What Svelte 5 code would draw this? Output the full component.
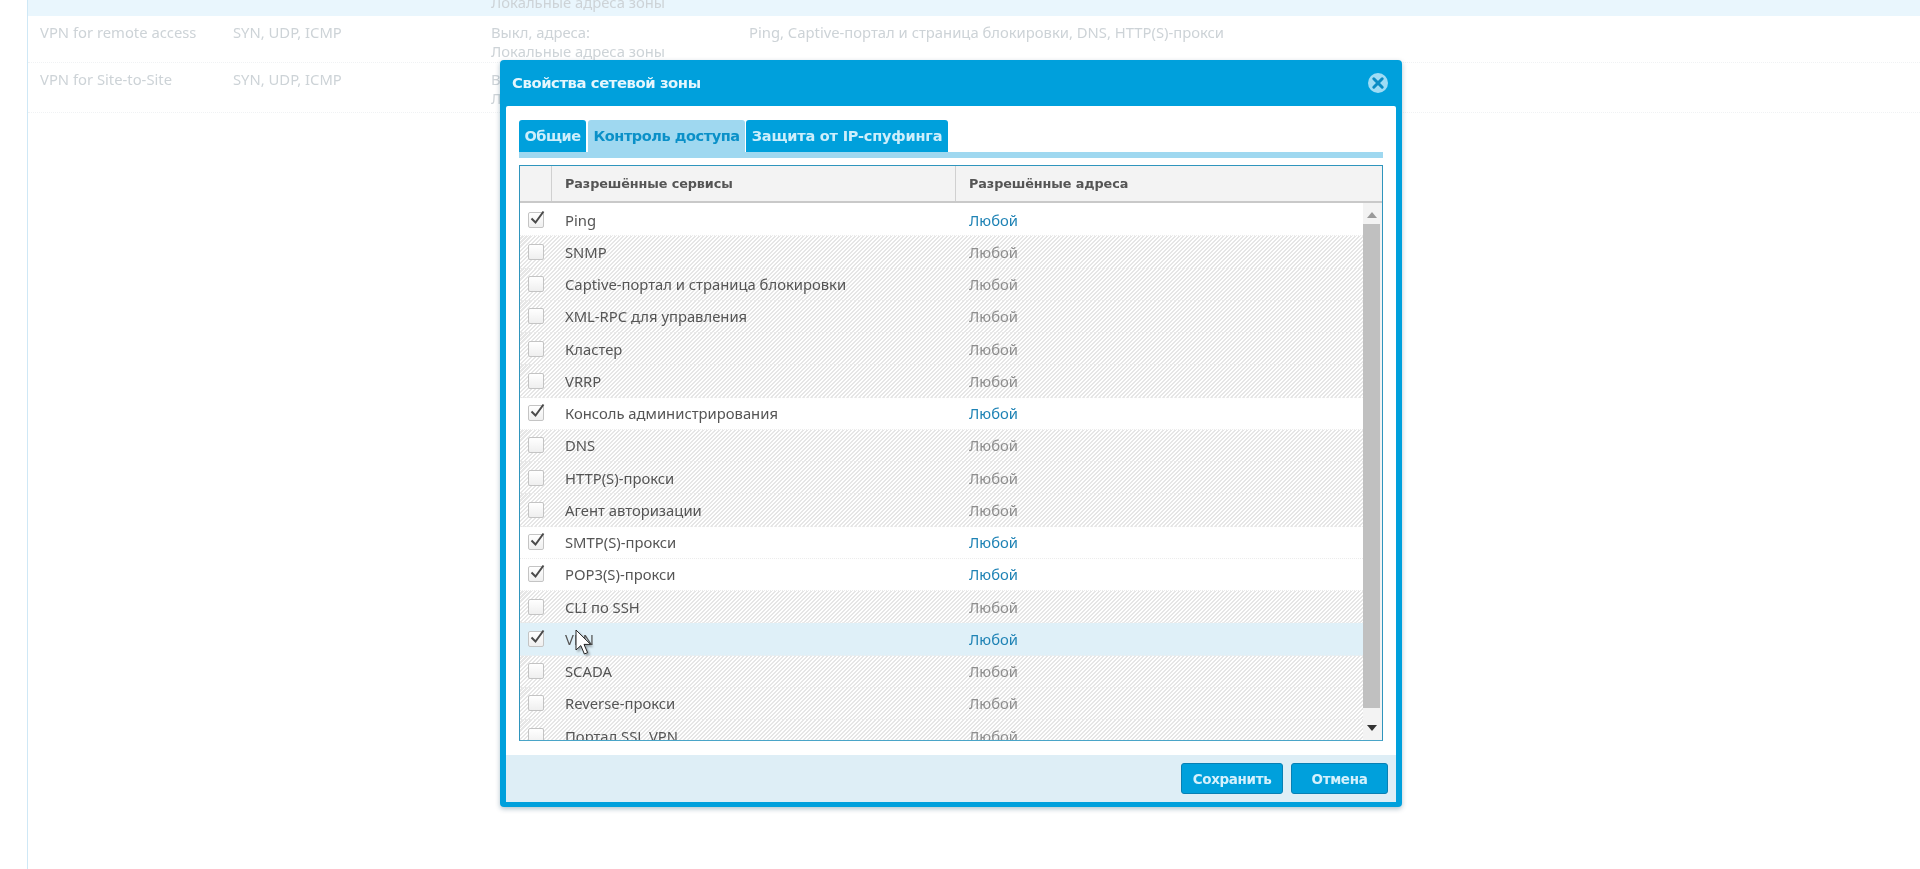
<script>
  const bg = [
    { name: 'VPN for remote access', proto: 'SYN, UDP, ICMP', addr: ['Выкл, адреса:', 'Локальные адреса зоны'], svc: 'Ping, Captive-портал и страница блокировки, DNS, HTTP(S)-прокси' },
    { name: 'VPN for Site-to-Site', proto: 'SYN, UDP, ICMP', addr: ['Выкл, адреса:', 'Локальные адреса зоны'], svc: '' }
  ];
  const rows = [
    ['Ping', true], ['SNMP', false], ['Captive-портал и страница блокировки', false],
    ['XML-RPC для управления', false], ['Кластер', false], ['VRRP', false],
    ['Консоль администрирования', true], ['DNS', false], ['HTTP(S)-прокси', false],
    ['Агент авторизации', false], ['SMTP(S)-прокси', true], ['POP3(S)-прокси', true],
    ['CLI по SSH', false], ['VPN', true, true], ['SCADA', false], ['Reverse-прокси', false],
    ['Портал SSL VPN', false]
  ];
</script>

<div class="page">
  <div class="bgtable">
    <div class="toprow"><span class="addrcell">Локальные адреса зоны</span></div>
    {#each bg as r}
      <div class="bgrow">
        <span>{r.name}</span>
        <span>{r.proto}</span>
        <span>{r.addr[0]}<br />{r.addr[1]}</span>
        <span>{r.svc}</span>
      </div>
    {/each}
  </div>

  <div class="dialog">
    <header class="dhead">
      <span class="dtitle">Свойства сетевой зоны</span>
      <svg class="close" width="22" height="22" viewBox="0 0 22 22" aria-hidden="true">
        <circle cx="11" cy="11" r="10" fill="#9fdcf5" />
        <path d="M6.8 6.8 15.2 15.2M15.2 6.8 6.8 15.2" stroke="#0a8cc4" stroke-width="3" stroke-linecap="round" />
      </svg>
    </header>

    <div class="dbody">
      <div class="tabs">
        <span class="tab t1">Общие</span>
        <span class="tab t2 active">Контроль доступа</span>
        <span class="tab t3">Защита от IP-спуфинга</span>
      </div>
      <div class="strip"></div>

      <div class="grid">
        <div class="ghead">
          <span class="hc0"></span>
          <span class="hc1">Разрешённые сервисы</span>
          <span class="hc2">Разрешённые адреса</span>
        </div>
        <div class="gbody">
          <div class="rows">
            {#each rows as r}
              <div class="row" class:off={!r[1]} class:hover={r[2]}>
                <span class="cc">
                  <span class="box">
                    {#if r[1]}
                      <svg class="check" width="18" height="18" viewBox="0 0 18 18" aria-hidden="true">
                        <path d="M3.5 9.5 7.5 13.5 15.5 2.5" fill="none" stroke="#4a4a4a" stroke-width="2" />
                      </svg>
                    {/if}
                  </span>
                </span>
                <span class="c1">{r[0]}</span>
                <span class="c2">Любой</span>
              </div>
            {/each}
          </div>
          <div class="sbar">
            <svg class="arrow" width="10" height="6" viewBox="0 0 10 6" aria-hidden="true"><path d="M5 0 10 6H0Z" fill="#9a9a9a" /></svg>
            <div class="thumb"></div>
            <svg class="arrow" width="10" height="6" viewBox="0 0 10 6" aria-hidden="true"><path d="M5 6 10 0H0Z" fill="#333" /></svg>
          </div>
        </div>
      </div>
    </div>

    <footer class="dfoot">
      <button class="btn save">Сохранить</button>
      <button class="btn cancel">Отмена</button>
    </footer>
  </div>

  <svg class="cursor" width="20" height="28" viewBox="0 0 20 28" aria-hidden="true">
    <path d="M2 1V21L6.8 16.6 10.4 25 13.6 23.6 10 15.4H16.6Z" fill="#fff" stroke="#222" stroke-width="1" />
  </svg>
</div>

<style>
  :global(body) {
    margin: 0;
    background: #fff;
  }
  .page {
    position: relative;
    width: 1920px;
    height: 869px;
    overflow: hidden;
    font-family: "Noto Sans", "DejaVu Sans", sans-serif;
    font-size: 14.8px;
    background: #fff;
    filter: blur(0.45px);
  }
  .bgtable {
    margin-left: 27px;
    height: 869px;
    border-left: 1px solid #cfe8f6;
    color: #cdd3d7;
    line-height: 19px;
  }
  .toprow {
    height: 16px;
    background: #e9f6fd;
    overflow: hidden;
    position: relative;
    padding-left: 463px;
  }
  .addrcell {
    display: block;
    margin-top: -7px;
  }
  .bgrow {
    display: grid;
    grid-template-columns: 193px 258px 258px 1fr;
    padding: 7px 0 0 12px;
    height: 39px;
    border-bottom: 1px dotted #f0f2f4;
  }
  .bgrow + .bgrow {
    height: 42px;
  }
  .dialog {
    position: absolute;
    left: 500px;
    top: 60px;
    width: 902px;
    height: 747px;
    box-sizing: border-box;
    background: #00a0dc;
    border-radius: 4px;
    padding: 0 6px 5px;
    display: flex;
    flex-direction: column;
    box-shadow: 0 2px 5px rgba(0, 60, 90, 0.3);
  }
  .dhead {
    height: 45px;
    flex: none;
    display: flex;
    align-items: center;
    justify-content: space-between;
    padding: 0 7px 1px 6px;
    color: #e4f6fd;
  }
  .dtitle {
    font-family: "DejaVu Sans", sans-serif;
    font-weight: 700;
    font-size: 14.8px;
    letter-spacing: -0.42px;
  }
  .close {
    display: block;
  }
  .dbody {
    flex: 1;
    min-height: 0;
    background: #fff;
    padding: 14px 13px 14px;
    display: flex;
    flex-direction: column;
    border-radius: 2px 2px 0 0;
  }
  .tabs {
    display: flex;
    height: 32px;
    gap: 2px;
    flex: none;
  }
  .tab {
    box-sizing: border-box;
    display: flex;
    align-items: center;
    justify-content: center;
    font-family: "DejaVu Sans", sans-serif;
    font-weight: 700;
    font-size: 14.5px;
    letter-spacing: -0.45px;
    background: #00a0dc;
    color: #cdeefb;
    border-radius: 3px 3px 0 0;
    white-space: nowrap;
  }
  .t1 { width: 67px; }
  .t2 { width: 157px; }
  .t3 { width: 202px; margin-left: -1px; letter-spacing: -0.2px; }
  .tab.active {
    background: #9fd8f0;
    color: #0a90c8;
  }
  .strip {
    height: 6px;
    flex: none;
    background: #9fd8f0;
  }
  .grid {
    margin-top: 7px;
    flex: 1;
    min-height: 0;
    border: 1px solid #2f95bd;
    border-bottom-color: #4aa5c8;
    display: flex;
    flex-direction: column;
    overflow: hidden;
  }
  .ghead {
    flex: none;
    height: 37px;
    box-sizing: border-box;
    display: flex;
    background: #f3f3f3;
    border-bottom: 2px solid #c9c9c9;
    color: #555;
    font-family: "DejaVu Sans", sans-serif;
    font-weight: 700;
    font-size: 12.8px;
    letter-spacing: -0.1px;
  }
  .ghead span {
    display: flex;
    align-items: center;
    box-sizing: border-box;
  }
  .hc0 {
    width: 32px;
    border-right: 1px solid #d0d0d0;
  }
  .hc1 {
    width: 404px;
    padding-left: 13px;
    border-right: 1px solid #d0d0d0;
  }
  .hc2 {
    padding-left: 13px;
  }
  .gbody {
    flex: 1;
    min-height: 0;
    display: flex;
    overflow: hidden;
  }
  .rows {
    flex: 1;
    min-width: 0;
    padding-top: 1px;
  }
  .row {
    height: 32.25px;
    display: flex;
    align-items: center;
    color: #555;
    background: #fff;
    border-bottom: 1px dotted #ececec;
    box-sizing: border-box;
  }
  .row.off {
    background: repeating-linear-gradient(135deg, #ffffff 0 1.41px, #e6e6e6 1.41px 2.83px);
  }
  .row.hover {
    background: #dff0f8;
  }
  .cc {
    width: 32px;
    flex: none;
    display: flex;
    justify-content: center;
  }
  .box {
    position: relative;
    box-sizing: border-box;
    width: 16px;
    height: 16px;
    background: linear-gradient(#ffffff, #efefef);
    border: 1px solid #c4c4c4;
    border-radius: 2px;
  }
  .check {
    position: absolute;
    left: -1px;
    top: -4px;
  }
  .c1 {
    width: 404px;
    flex: none;
    box-sizing: border-box;
    padding-left: 13px;
  }
  .c2 {
    padding-left: 13px;
    color: #8e8e8e;
  }
  .row:not(.off) .c2 {
    color: #1f83b5;
  }
  .sbar {
    flex: none;
    width: 19px;
    background: #f3f3f3;
    display: flex;
    flex-direction: column;
    align-items: center;
    padding: 9px 2px 9px 0;
    box-sizing: border-box;
    gap: 6px;
  }
  .thumb {
    flex: 1;
    width: 17px;
    background: #c0c0c0;
    margin-bottom: 11px;
  }
  .arrow {
    display: block;
    flex: none;
  }
  .dfoot {
    flex: none;
    height: 47px;
    box-sizing: border-box;
    background: #deeef6;
    display: flex;
    justify-content: flex-end;
    align-items: flex-start;
    gap: 8px;
    padding: 8px 8px 0 0;
  }
  .btn {
    height: 31px;
    padding: 0;
    background: #00a0dc;
    color: #d5f1fc;
    border: 1px solid #0880b4;
    border-radius: 3px;
    font-family: "DejaVu Sans", sans-serif;
    font-weight: 700;
    font-size: 13.5px;
    letter-spacing: -0.35px;
  }
  .save { width: 102px; }
  .cancel { width: 97px; }
  .cursor {
    position: absolute;
    left: 574px;
    top: 629px;
    filter: drop-shadow(2px 2px 1px rgba(0, 0, 0, 0.3));
  }
</style>
